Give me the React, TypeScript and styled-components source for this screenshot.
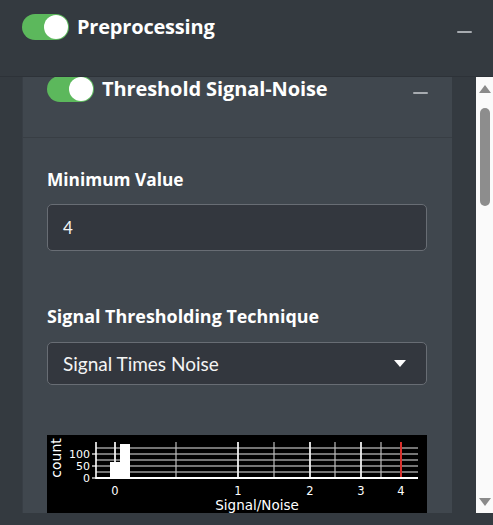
import styled, { createGlobalStyle } from "styled-components";

const GlobalStyle = createGlobalStyle`
  html, body {
    margin: 0;
    padding: 0;
    background: #343a40;
  }
  body {
    font-family: Lato, "Open Sans", sans-serif;
    color: #ffffff;
  }
`

const Page = styled.div`
  display: flex;
  flex-direction: column;
  width: 493px;
  height: 525px;
  overflow: hidden;
  background: #343a40;
`

const Header = styled.div`
  display: flex;
  align-items: flex-start;
  box-sizing: border-box;
  height: 77px;
  padding: 14px 21px 0 22px;
  border-bottom: 1px solid #2d3238;
`

const Toggle = styled.div`
  position: relative;
  flex: 0 0 auto;
  width: 47px;
  height: 26px;
  border-radius: 13px;
  background: #5cb85c;
  &::after {
    content: "";
    position: absolute;
    top: 1px;
    right: 1px;
    width: 24px;
    height: 24px;
    border-radius: 50%;
    background: #ffffff;
  }
`

const Title = styled.span<{ $size: number; $track: number }>`
  flex: 1;
  margin: 2px 0 0 8px;
  font-family: "Open Sans", Lato, sans-serif;
  font-size: ${(p) => p.$size}px;
  font-weight: 700;
  line-height: 22px;
  letter-spacing: ${(p) => p.$track}px;
  white-space: nowrap;
`

const Minus = styled.span<{ $top: number }>`
  flex: 0 0 auto;
  width: 15px;
  height: 2px;
  margin-top: ${(p) => p.$top}px;
  border-radius: 1px;
  background: #a7abb0;
`

const Body = styled.div`
  display: flex;
  height: 436px;
  overflow: hidden;
`

const Viewport = styled.div`
  flex: 1;
  padding: 0 24px 0 22px;
  overflow: hidden;
`

const Panel = styled.div`
  margin-top: -16px;
  background: #40474e;
  border-left: 1px solid #383e45;
`

const PanelHeader = styled.div`
  display: flex;
  align-items: flex-start;
  box-sizing: border-box;
  height: 77px;
  padding: 15px 24px 0 24px;
  border-bottom: 1px solid #383e44;
`

const PanelBody = styled.div`
  display: flex;
  flex-direction: column;
  padding: 32px 25px 20px 24px;
`

const Label = styled.label<{ $gap: number; $size: number }>`
  display: block;
  margin-bottom: ${(p) => p.$gap}px;
  font-family: "Open Sans", Lato, sans-serif;
  font-size: ${(p) => p.$size}px;
  font-weight: 700;
  line-height: 20px;
  white-space: nowrap;
`

const Field = styled.div<{ $h: number; $size: number }>`
  display: flex;
  align-items: center;
  box-sizing: border-box;
  height: ${(p) => p.$h}px;
  padding: 0 20px 0 15px;
  border: 1px solid #686d74;
  border-radius: 5px;
  background: #33373e;
  font-size: ${(p) => p.$size}px;
  color: #f4f4f4;
`

const Value = styled.span`
  flex: 1;
`

const Caret = styled.span`
  width: 0;
  height: 0;
  border-left: 6px solid transparent;
  border-right: 6px solid transparent;
  border-top: 7px solid #ffffff;
`

const Spacer = styled.div<{ $h: number }>`
  height: ${(p) => p.$h}px;
`

const Chart = styled.div`
  background: #000000;
  height: 110px;
  svg {
    display: block;
  }
`

const Scrollbar = styled.div`
  display: flex;
  flex-direction: column;
  align-items: center;
  width: 17px;
  height: 437px;
  background: #fafafa;
`

const Arrow = styled.span<{ $down?: boolean }>`
  width: 0;
  height: 0;
  margin-top: ${(p) => (p.$down ? "auto" : "8px")};
  margin-bottom: ${(p) => (p.$down ? "8px" : "0")};
  border-left: 6px solid transparent;
  border-right: 6px solid transparent;
  ${(p) =>
    p.$down
      ? "border-top: 8px solid #8a8a8a;"
      : "border-bottom: 8px solid #8a8a8a;"}
`

const Thumb = styled.div`
  width: 10px;
  height: 98px;
  margin-top: 15px;
  border-radius: 5px;
  background: #8d8d8d;
`

const Footer = styled.div`
  flex: 1;
  background: #343a40;
`

const minor = [176, 274, 335, 381]
const major = [115, 238, 310, 361]
const ticks = [
  { x: 115, t: "0" },
  { x: 238, t: "1" },
  { x: 310, t: "2" },
  { x: 361, t: "3" },
  { x: 401, t: "4" },
]

function Histogram() {
  // chart coordinates in page pixels, offset by the box's top-left (47, 435)
  const ox = 47
  const oy = 435
  const X = (x: number) => x - ox
  const Y = (y: number) => y - oy
  const font = "'DejaVu Sans', sans-serif"
  return (
    <svg width="379" height="110" viewBox="0 0 379 110">
      {[448, 454, 460, 466, 472].map((y) => (
        <line key={y} x1={X(96)} x2={X(418)} y1={Y(y)} y2={Y(y)} stroke="#e8e8e8" strokeWidth={y % 12 === 6 ? 1.6 : 1.2} />
      ))}
      {minor.map((x) => (
        <line key={x} x1={X(x)} x2={X(x)} y1={Y(442)} y2={Y(478)} stroke="#bdbdbd" strokeWidth="1.2" />
      ))}
      {major.map((x) => (
        <line key={x} x1={X(x)} x2={X(x)} y1={Y(442)} y2={Y(478)} stroke="#f0f0f0" strokeWidth="1.8" />
      ))}
      <line x1={X(96)} x2={X(96)} y1={Y(442)} y2={Y(479)} stroke="#ffffff" strokeWidth="1.6" />
      <rect x={X(110)} y={Y(462)} width="10" height="16" fill="#ffffff" />
      <rect x={X(120)} y={Y(444)} width="10" height="34" fill="#ffffff" />
      <line x1={X(401)} x2={X(401)} y1={Y(442)} y2={Y(478)} stroke="#d9302c" strokeWidth="2" />
      <line x1={X(96)} x2={X(418)} y1={Y(478)} y2={Y(478)} stroke="#ffffff" strokeWidth="2.2" />
      {[454, 466, 478].map((y) => (
        <line key={y} x1={X(92)} x2={X(96)} y1={Y(y)} y2={Y(y)} stroke="#ffffff" strokeWidth="1.2" />
      ))}
      <text x={X(90)} y={Y(458)} fill="#ffffff" fontSize="11" fontFamily={font} textAnchor="end">100</text>
      <text x={X(90)} y={Y(470)} fill="#ffffff" fontSize="11" fontFamily={font} textAnchor="end">50</text>
      <text x={X(90)} y={Y(482)} fill="#ffffff" fontSize="11" fontFamily={font} textAnchor="end">0</text>
      <text transform={`translate(${X(61)} ${Y(458)}) rotate(-90)`} fill="#ffffff" fontSize="14" fontFamily={font} textAnchor="middle">count</text>
      {ticks.map((k) => (
        <text key={k.t} x={X(k.x)} y={Y(495)} fill="#ffffff" fontSize="11.5" fontFamily={font} textAnchor="middle">{k.t}</text>
      ))}
      <text x={X(257)} y={Y(510)} fill="#ffffff" fontSize="13.5" fontFamily={font} textAnchor="middle">Signal/Noise</text>
    </svg>
  )
}

export default function App() {
  return (
    <Page>
      <GlobalStyle />
      <Header>
        <Toggle />
        <Title $size={20} $track={-0.2}>Preprocessing</Title>
        <Minus $top={17} />
      </Header>
      <Body>
        <Viewport>
          <Panel>
            <PanelHeader>
              <Toggle />
              <Title $size={20} $track={-0.1}>Threshold Signal-Noise</Title>
              <Minus $top={16} />
            </PanelHeader>
            <PanelBody>
              <Label $gap={14} $size={17.3}>Minimum Value</Label>
              <Field $h={47} $size={17}>
                <Value>4</Value>
              </Field>
              <Spacer $h={55} />
              <Label $gap={16} $size={17.9}>Signal Thresholding Technique</Label>
              <Field $h={43} $size={19}>
                <Value>Signal Times Noise</Value>
                <Caret />
              </Field>
              <Spacer $h={50} />
              <Chart>
                <Histogram />
              </Chart>
            </PanelBody>
          </Panel>
        </Viewport>
        <Scrollbar>
          <Arrow />
          <Thumb />
          <Arrow $down />
        </Scrollbar>
      </Body>
      <Footer />
    </Page>
  )
}
